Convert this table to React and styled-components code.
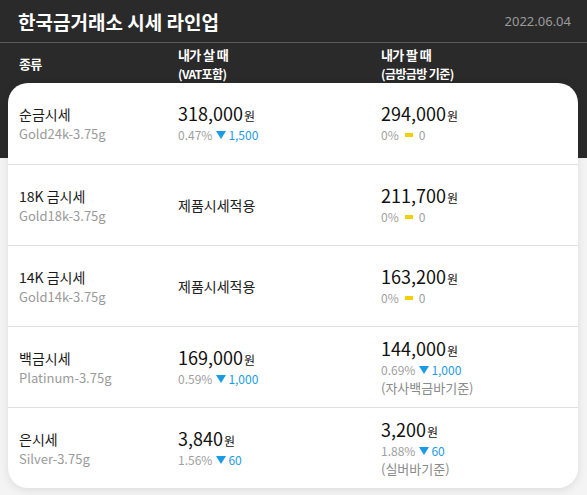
import styled, { createGlobalStyle } from 'styled-components';

const GlobalStyle = createGlobalStyle`
  html, body {
    margin: 0;
    padding: 0;
  }
  body {
    background: linear-gradient(#2a2a2a 0 158px, #f4f4f4 158px);
    font-family: 'Noto Sans CJK KR', 'Noto Sans', sans-serif;
    min-height: 495px;
  }
`;

const Page = styled.div`
  width: 587px;
`;

const TopBar = styled.header`
  height: 43px;
  display: flex;
  align-items: center;
  justify-content: space-between;
  padding: 0 16px 0 18px;
  border-bottom: 1px solid #5a5a5a;
  box-sizing: border-box;
`;

const Title = styled.h1`
  margin: 0;
  font-size: 19px;
  font-weight: 700;
  color: #fff;
`;

const DateText = styled.span`
  font-size: 13px;
  color: #9a9a9a;
  font-family: 'Noto Sans', sans-serif;
`;

const Columns = styled.div`
  display: grid;
  grid-template-columns: 159px 203px 1fr;
`;

const HeadRow = styled(Columns)`
  height: 40px;
  padding: 0 11px 0 19px;
  align-items: center;
  color: #fff;
  font-weight: 700;
  letter-spacing: -0.6px;
`;

const HeadCell = styled.div`
  display: flex;
  flex-direction: column;
  font-size: 13px;
  line-height: 19px;
  padding-top: ${({ $stack }) => ($stack ? '2px' : '0')};
`;

const HeadSub = styled.span`
  font-size: 12px;
`;

const Card = styled.section`
  margin: 0 9px 0 8px;
  background: #fff;
  border-radius: 20px;
  box-shadow: 0 2px 10px rgba(0, 0, 0, 0.1);
  overflow: hidden;
`;

const Row = styled(Columns)`
  height: 81px;
  padding: 0 0 0 11px;
  align-items: center;
  border-top: ${({ $first }) => ($first ? 'none' : '1px solid #e0e0e0')};
  box-sizing: border-box;
`;

const Cell = styled.div`
  display: flex;
  flex-direction: column;
`;

const Name = styled.span`
  font-size: 14px;
  line-height: 20px;
  color: #1a1a1a;
`;

const Sub = styled.span`
  font-size: 13px;
  line-height: 19px;
  color: #9a9a9a;
`;

const Price = styled.span`
  font-size: 18px;
  line-height: 21px;
  color: #111;
`;

const Won = styled.span`
  font-size: 12px;
  margin-left: 1px;
`;

const Change = styled.span`
  display: flex;
  align-items: center;
  gap: 4px;
  font-size: 12px;
  line-height: 18px;
  color: #a0a0a0;
`;

const Down = styled.span`
  color: #1a9be6;
  display: flex;
  align-items: center;
  gap: 2px;
`;

const Flat = styled.i`
  display: inline-block;
  width: 8px;
  height: 4px;
  background: #f5d000;
  margin: 0 2px;
`;

const Note = styled.span`
  font-size: 13px;
  line-height: 18px;
  color: #8a8a8a;
`;

const Plain = styled.span`
  font-size: 14px;
  color: #222;
`;

function Tri() {
  return (
    <svg width="10" height="8" viewBox="0 0 10 8">
      <path d="M0 0h10L5 8z" fill="#1a9be6" />
    </svg>
  );
}

function Quote({ price, pct, diff, note }) {
  return (
    <Cell>
      <Price>
        {price}
        <Won>원</Won>
      </Price>
      <Change>
        {pct}
        {diff === '0' ? (
          <>
            <Flat />0
          </>
        ) : (
          <Down>
            <Tri />
            {diff}
          </Down>
        )}
      </Change>
      {note && <Note>{note}</Note>}
    </Cell>
  );
}

const rows = [
  {
    name: '순금시세',
    sub: 'Gold24k-3.75g',
    buy: { price: '318,000', pct: '0.47%', diff: '1,500' },
    sell: { price: '294,000', pct: '0%', diff: '0' },
  },
  {
    name: '18K 금시세',
    sub: 'Gold18k-3.75g',
    buy: null,
    sell: { price: '211,700', pct: '0%', diff: '0' },
  },
  {
    name: '14K 금시세',
    sub: 'Gold14k-3.75g',
    buy: null,
    sell: { price: '163,200', pct: '0%', diff: '0' },
  },
  {
    name: '백금시세',
    sub: 'Platinum-3.75g',
    buy: { price: '169,000', pct: '0.59%', diff: '1,000' },
    sell: { price: '144,000', pct: '0.69%', diff: '1,000', note: '(자사백금바기준)' },
  },
  {
    name: '은시세',
    sub: 'Silver-3.75g',
    buy: { price: '3,840', pct: '1.56%', diff: '60' },
    sell: { price: '3,200', pct: '1.88%', diff: '60', note: '(실버바기준)' },
  },
];

export default function App() {
  return (
    <Page>
      <GlobalStyle />
      <TopBar>
        <Title>한국금거래소 시세 라인업</Title>
        <DateText>2022.06.04</DateText>
      </TopBar>
      <HeadRow>
        <HeadCell>종류</HeadCell>
        <HeadCell $stack>
          내가 살 때<HeadSub>(VAT포함)</HeadSub>
        </HeadCell>
        <HeadCell $stack>
          내가 팔 때<HeadSub>(금방금방 기준)</HeadSub>
        </HeadCell>
      </HeadRow>
      <Card>
        {rows.map((r, i) => (
          <Row key={r.name} $first={i === 0}>
            <Cell>
              <Name>{r.name}</Name>
              <Sub>{r.sub}</Sub>
            </Cell>
            {r.buy ? <Quote {...r.buy} /> : <Plain>제품시세적용</Plain>}
            <Quote {...r.sell} />
          </Row>
        ))}
      </Card>
    </Page>
  );
}
